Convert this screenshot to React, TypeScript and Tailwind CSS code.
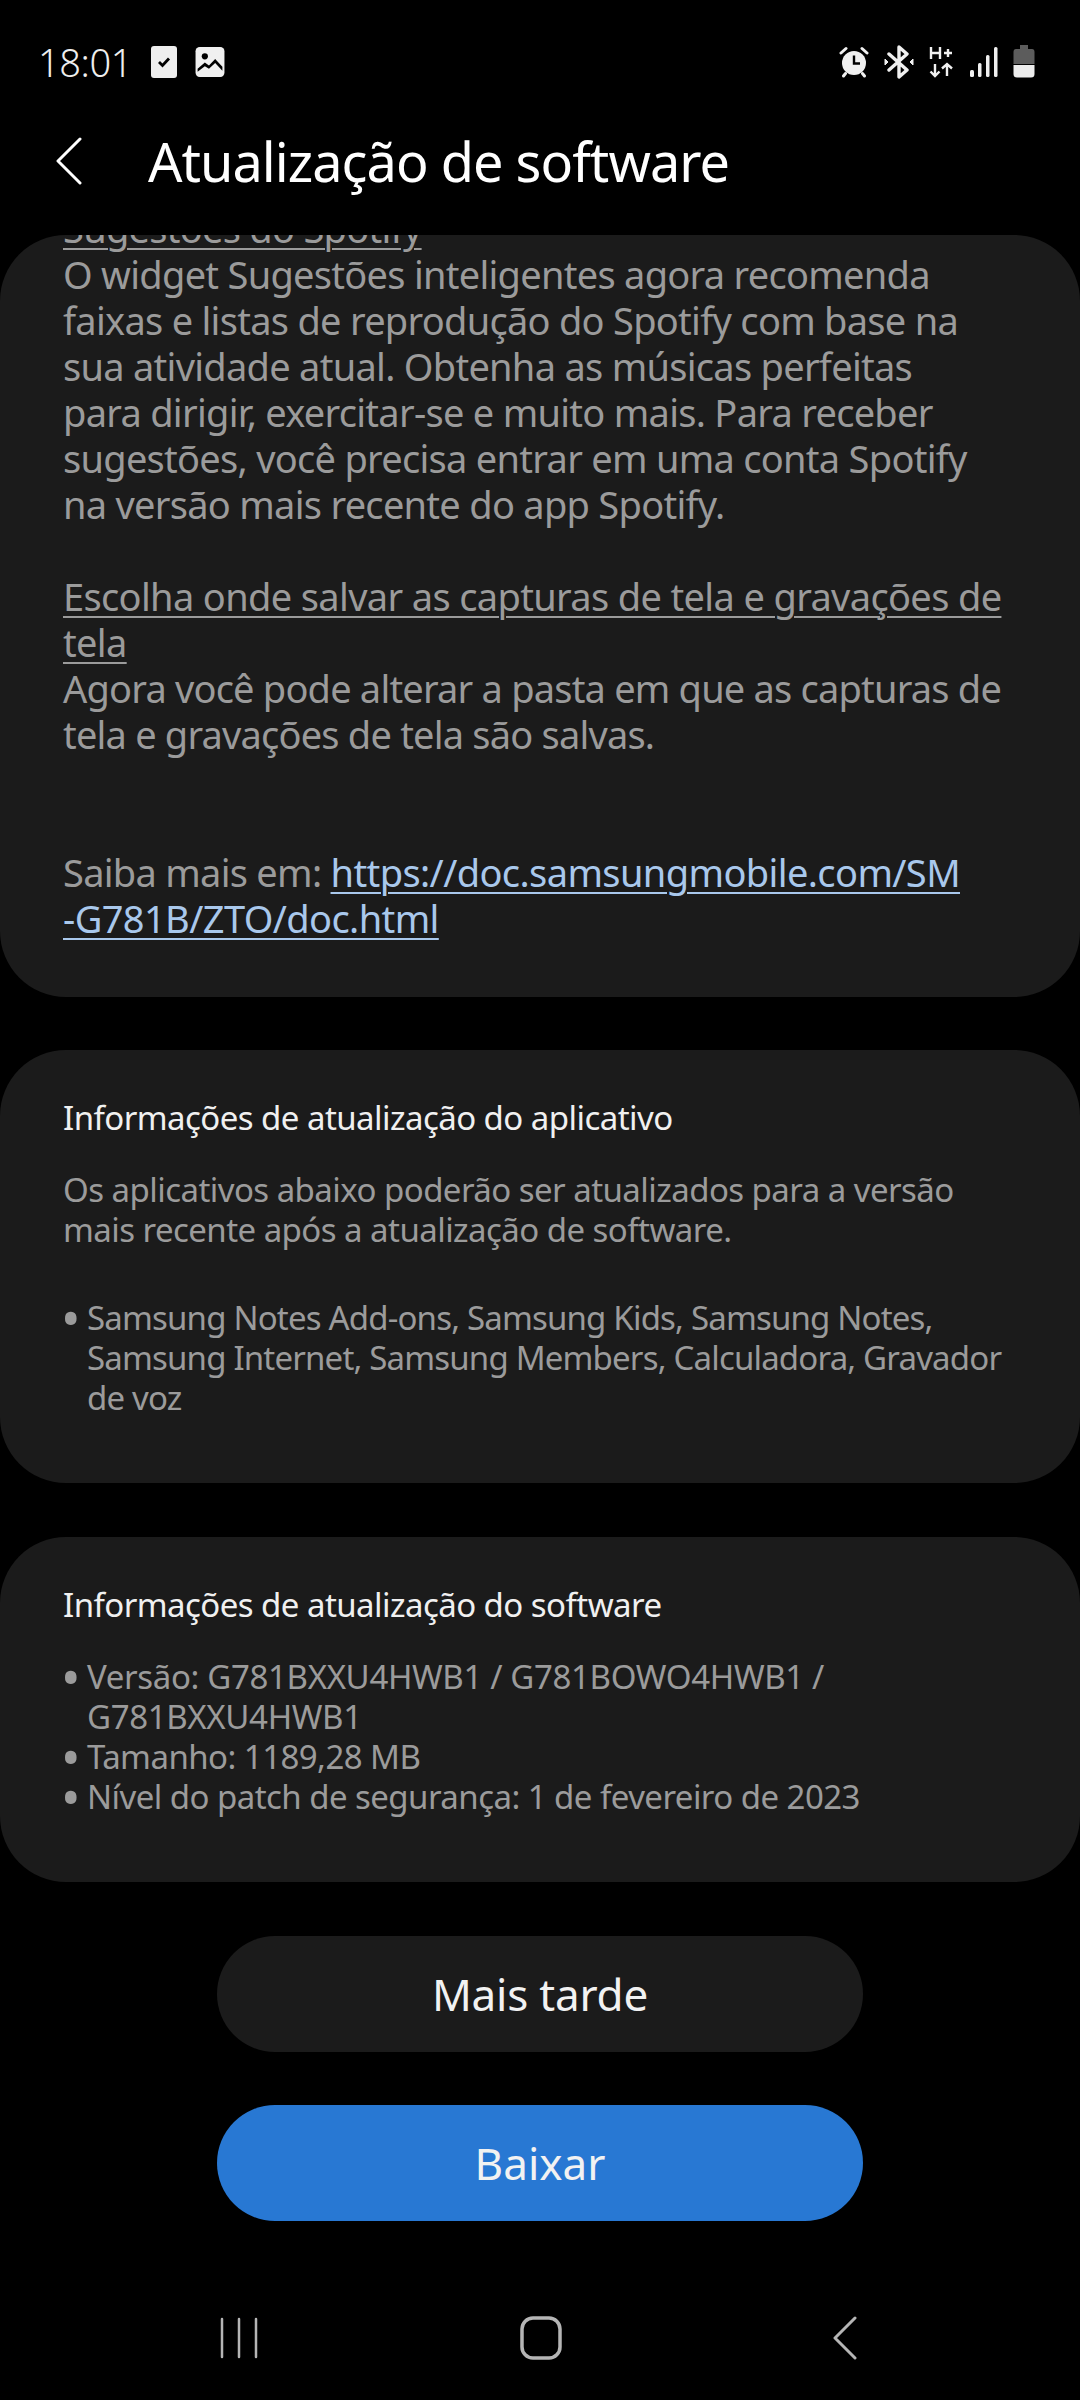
import React from 'react';

const font = { fontFamily: '"Noto Sans", sans-serif' };

const AlarmIcon = () => (
  <svg width="30" height="32" viewBox="0 0 30 32" fill="none">
    <circle cx="15" cy="17" r="12" fill="#f0f0f0" />
    <path d="M15 9.5V17.5H21" stroke="#000" strokeWidth="2.4" />
    <path d="M2 7L7 2.5M28 7L23 2.5M6.5 27.5L4.5 30M23.5 27.5L25.5 30" stroke="#f0f0f0" strokeWidth="3" strokeLinecap="round" />
  </svg>
);

const BluetoothIcon = () => (
  <svg width="30" height="34" viewBox="0 0 30 34" fill="none">
    <path d="M5 9L23 25L15 32V2L23 9L5 25" stroke="#f0f0f0" strokeWidth="3.4" strokeLinejoin="round" strokeLinecap="round" />
    <path d="M1 14V20L4 17ZM29 14V20L26 17Z" fill="#f0f0f0" stroke="#f0f0f0" strokeWidth="1" strokeLinejoin="round" />
  </svg>
);

const DataIcon = () => (
  <svg width="24" height="32" viewBox="0 0 24 32" fill="none" stroke="#f0f0f0" strokeWidth="2.4">
    <path d="M2 1V13M11 1V13M2 7H11M15 7H23M19 3V11" />
    <path d="M6 18V30M1.5 25.5L6 30L10.5 25.5M18 30V18M13 22.5L18 18L23 22.5" />
  </svg>
);

const SignalIcon = () => (
  <svg width="30" height="30" viewBox="0 0 30 30" fill="#f0f0f0">
    <rect x="0" y="23" width="4" height="7" rx="1.5" />
    <rect x="8" y="16" width="3.5" height="14" rx="1.5" />
    <rect x="16" y="8" width="3.5" height="22" rx="1.5" />
    <rect x="24" y="0" width="3.5" height="30" rx="1.5" />
  </svg>
);

const BatteryIcon = () => (
  <svg width="22" height="33" viewBox="0 0 22 33">
    <path d="M7 0H15V4H19Q21.500 4 21.500 7V19H0.500V7Q0.500 4 3 4H7Z" fill="#5c5c5c" />
    <path d="M0.500 20H21.500V29Q21.500 32.500 18 32.500H4Q0.500 32.500 0.500 29Z" fill="#ececec" />
  </svg>
);

const StatusBar = () => (
  <div className="flex h-[124px] shrink-0 items-center pl-[38px] pr-[45px] pb-[1px] text-[#eeeeee]">
    <span className="text-[38px] leading-none tracking-[-0.4px] font-light" style={font}>18:01</span>
    <div className="ml-[19px] flex h-[32px] w-[26px] items-center justify-center rounded-[3px] bg-[#eeeeee]">
      <svg width="16" height="14" viewBox="0 0 16 14" fill="none">
        <path d="M3 7L6.500 10.500L13 3.500" stroke="#000" strokeWidth="2.800" />
      </svg>
    </div>
    <svg className="ml-[17px]" width="32" height="32" viewBox="0 0 30 31">
      <rect x="1" y="1" width="28" height="29" rx="4" fill="#f0f0f0" />
      <circle cx="10" cy="10" r="3" fill="#000" />
      <path d="M3 22L10 16L14 19L20 12.500L27 20V24L20 16.500L14 22L10 19.500L3 25Z" fill="#000" />
    </svg>
    <div className="ml-auto flex items-center gap-[15px]">
      <AlarmIcon />
      <BluetoothIcon />
      <DataIcon />
      <div className="ml-[2px]"><SignalIcon /></div>
      <div className="-ml-[2px]"><BatteryIcon /></div>
    </div>
  </div>
);

const Header = () => (
  <div className="flex h-[111px] shrink-0 items-center pb-[38px]">
    <svg className="ml-[56px]" width="26" height="50" viewBox="0 0 26 50" fill="none">
      <path d="M24 3L2 25L24 47" stroke="#fff" strokeWidth="3" strokeLinecap="round" strokeLinejoin="round" />
    </svg>
    <h1 className="ml-[66px] text-[54px] leading-none font-normal tracking-[-0.95px] text-white" style={font}>
      Atualização de software
    </h1>
  </div>
);

const Bullet = ({ children }: { children: React.ReactNode }) => (
  <div className="flex">
    <span className="-ml-[2px] w-[26px] shrink-0 text-left text-[52px] leading-[40px]">•</span>
    <span>{children}</span>
  </div>
);

const NavBar = () => (
  <div className="mt-auto flex h-[179px] shrink-0 items-center pt-[54px]">
    <svg className="ml-[220px]" width="38" height="42" viewBox="0 0 38 42" stroke="#b5b5b5" strokeWidth="2.500" strokeLinecap="round">
      <path d="M2 2V40M19 2V40M36 2V40" />
    </svg>
    <svg className="ml-[262px]" width="42" height="44" viewBox="0 0 42 44" fill="none" stroke="#b5b5b5" strokeWidth="3.500">
      <rect x="2" y="2" width="38" height="40" rx="11" />
    </svg>
    <svg className="ml-[271px]" width="24" height="44" viewBox="0 0 24 44" fill="none" stroke="#b5b5b5" strokeWidth="3" strokeLinecap="round" strokeLinejoin="round">
      <path d="M22 2L2 22L22 42" />
    </svg>
  </div>
);

export default function App() {
  return (
    <div className="flex h-[2400px] w-[1080px] flex-col overflow-hidden bg-black" style={font}>
      <StatusBar />
      <Header />

      <div className="flex h-[762px] shrink-0 flex-col overflow-hidden rounded-[66px] bg-[#1b1b1b] px-[63px] text-[38px] leading-[46px] tracking-[-0.72px] text-[#9b9b9b]">
        <div className="-mt-[30px]">
          <p className="underline decoration-[2px] underline-offset-[5px]">Sugestões do Spotify</p>
          <p>
            O widget Sugestões inteligentes agora recomenda<br />
            faixas e listas de reprodução do Spotify com base na<br />
            sua atividade atual. Obtenha as músicas perfeitas<br />
            para dirigir, exercitar-se e muito mais. Para receber<br />
            sugestões, você precisa entrar em uma conta Spotify<br />
            na versão mais recente do app Spotify.
          </p>
          <p className="mt-[46px] tracking-[-0.65px] underline decoration-[2px] underline-offset-[5px]">
            Escolha onde salvar as capturas de tela e gravações de<br />tela
          </p>
          <p className="tracking-[-0.8px]">
            Agora você pode alterar a pasta em que as capturas de<br />
            tela e gravações de tela são salvas.
          </p>
          <p className="mt-[92px]">
            Saiba mais em:{' '}
            <span className="tracking-[-0.6px] text-[#a9c8ec] underline decoration-[2px] underline-offset-[5px]">
              https://doc.samsungmobile.com/SM<br />-G781B/ZTO/doc.html
            </span>
          </p>
        </div>
      </div>

      <div className="mt-[53px] h-[433px] shrink-0 rounded-[66px] bg-[#1b1b1b] px-[63px] pt-[48px] text-[33px] leading-[40px] tracking-[-0.55px] text-[#9b9b9b]">
        <p className="text-[#f0f0f0]">Informações de atualização do aplicativo</p>
        <p className="mt-[32px]">
          Os aplicativos abaixo poderão ser atualizados para a versão<br />
          mais recente após a atualização de software.
        </p>
        <div className="mt-[48px] tracking-[-0.82px]">
          <Bullet>
            Samsung Notes Add-ons, Samsung Kids, Samsung Notes,<br />
            Samsung Internet, Samsung Members, Calculadora, Gravador<br />
            de voz
          </Bullet>
        </div>
      </div>

      <div className="mt-[54px] h-[345px] shrink-0 rounded-[66px] bg-[#1b1b1b] px-[63px] pt-[48px] text-[33px] leading-[40px] tracking-[-0.55px] text-[#9b9b9b]">
        <p className="text-[#f0f0f0]">Informações de atualização do software</p>
        <div className="mt-[32px]">
          <Bullet>
            <span className="tracking-[-0.35px]">Versão: G781BXXU4HWB1 / G781BOWO4HWB1 /<br />G781BXXU4HWB1</span>
          </Bullet>
          <Bullet>Tamanho: 1189,28 MB</Bullet>
          <Bullet>Nível do patch de segurança: 1 de fevereiro de 2023</Bullet>
        </div>
      </div>

      <div className="mt-[54px] flex flex-col items-center gap-[53px]">
        <button className="flex h-[116px] w-[646px] items-center justify-center rounded-full bg-[#1b1b1b] text-[44px] tracking-[-0.2px] text-[#f2f2f2]">
          Mais tarde
        </button>
        <button className="flex h-[116px] w-[646px] items-center justify-center rounded-full bg-[#2878d3] text-[44px] text-[#f2f2f2]">
          Baixar
        </button>
      </div>

      <NavBar />
    </div>
  );
}
